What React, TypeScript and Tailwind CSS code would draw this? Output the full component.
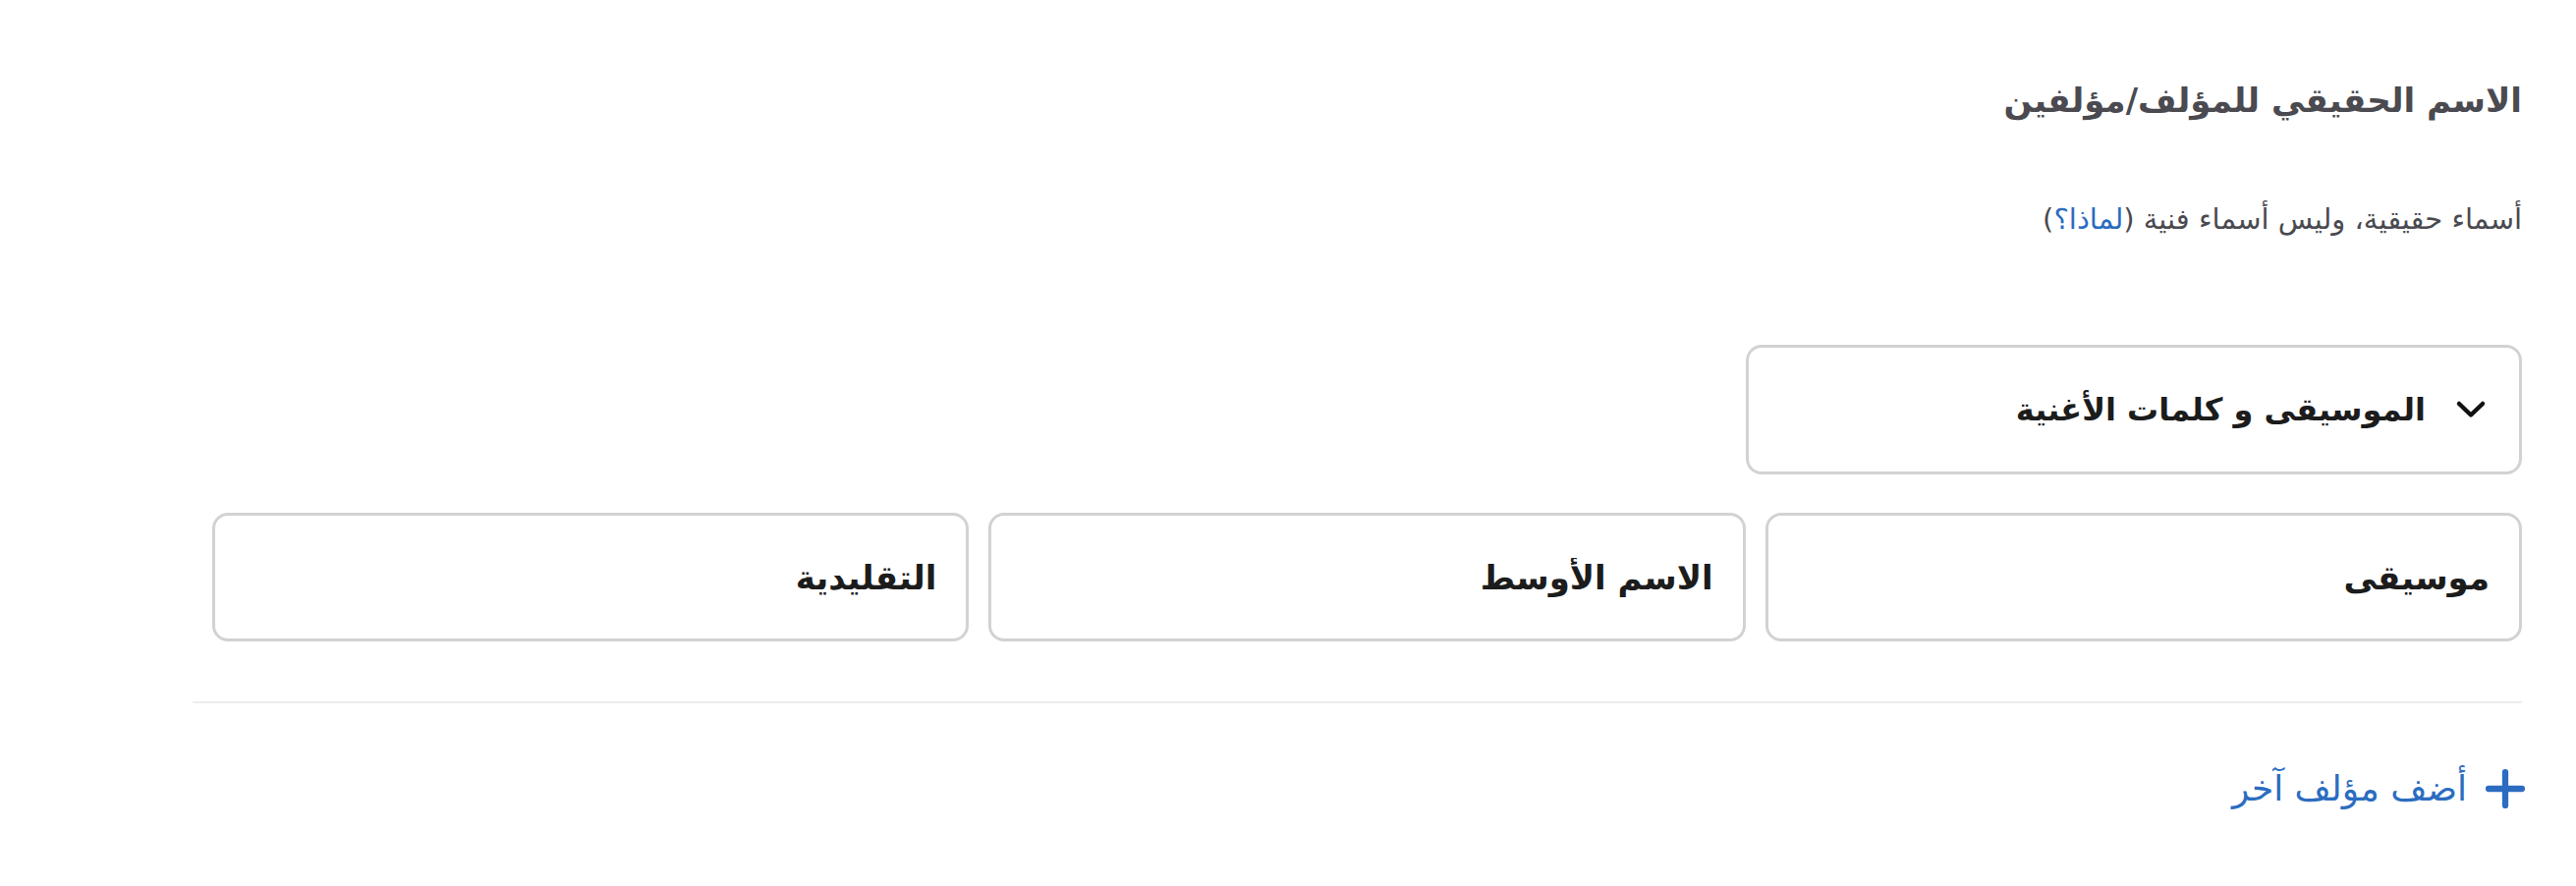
import { Plus } from 'lucide-react'

const fields = [
  { id: 'first', value: 'موسيقى' },
  { id: 'middle', value: 'الاسم الأوسط' },
  { id: 'last', value: 'التقليدية' },
]

function Chevron() {
  return (
    <svg width="32" height="20" viewBox="0 0 32 20" fill="none" className="shrink-0">
      <polyline points="4,4 16,15.5 28,4" stroke="#111" strokeWidth="4.5" strokeLinecap="round" strokeLinejoin="round" />
    </svg>
  )
}

export default function App() {
  return (
    <div dir="rtl" className="w-full h-[902px] bg-white pl-[196px] pr-[55px] font-['DejaVu_Sans',sans-serif]">
      <h2 className="pt-[72px] text-[34px] leading-[60px] font-bold text-[#4a4a50]">الاسم الحقيقي للمؤلف/مؤلفين</h2>

      <p className="mt-[71px] text-[29px] leading-[40px] text-[#4a4a50]">
        أسماء حقيقية، وليس أسماء فنية (<a href="#" className="text-[#2b6cc0]">لماذا؟</a>)
      </p>

      <div className="mt-[108px] w-1/3">
        <button className="flex items-center gap-[30px] w-full h-[132px] px-[33px] rounded-[16px] border-[3px] border-[#d2d2d2] bg-white text-[32px] font-bold text-[#1c1c1c]">
          <Chevron />
          <span>الموسيقى و كلمات الأغنية</span>
        </button>
      </div>

      <div className="mt-[39px] grid grid-cols-3">
        {fields.map((f) => (
          <div key={f.id} className="pl-[20px]">
            <input
              defaultValue={f.value}
              className="w-full h-[131px] px-[30px] rounded-[16px] border-[3px] border-[#d2d2d2] bg-white text-[34px] font-bold text-[#1c1c1c] outline-none"
            />
          </div>
        ))}
      </div>

      <div className="mt-[61px] h-[2px] bg-[#ededf0]" />

      <button className="mt-[58px] flex items-center gap-[10px] text-[36px] text-[#2b6cc0]">
        <Plus size={58} strokeWidth={2.6} className="shrink-0 -mr-[12px]" />
        <span>أضف مؤلف آخر</span>
      </button>
    </div>
  )
}
